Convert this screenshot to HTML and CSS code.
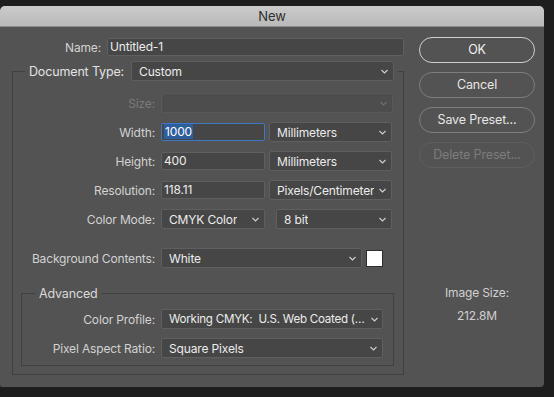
FILE: index.html
```html
<!DOCTYPE html>
<html lang="en">

<head>
  <meta charset="UTF-8">
  <title>New</title>
  <link rel="stylesheet" href="styles.css">
</head>

<body>
  <div class="window">
    <div class="titlebar">New</div>
    <div class="body">
      <!-- 左侧表单 -->
      <div class="form">
        <div class="name-row">
          <label class="lbl name-lbl">Name:</label>
          <div class="field grow">Untitled-1</div>
        </div>

        <fieldset class="group doc">
          <legend class="doc-legend">
            <label class="lbl doc-lbl">Document Type:</label>
            <div class="select grow">
              <span>Custom</span>
              <svg class="chev" width="7" height="5" viewBox="0 0 7 5"><polyline points="0.5,1 3.5,4 6.5,1" /></svg>
            </div>
          </legend>

          <div class="grid">
            <label class="lbl off">Size:</label>
            <div class="select off">
              <span></span>
              <svg class="chev" width="7" height="5" viewBox="0 0 7 5"><polyline points="0.5,1 3.5,4 6.5,1" /></svg>
            </div>

            <label class="lbl">Width:</label>
            <div class="pair">
              <div class="field num focus"><span class="hl">1000</span></div>
              <div class="select unit">
                <span>Millimeters</span>
                <svg class="chev" width="7" height="5" viewBox="0 0 7 5"><polyline points="0.5,1 3.5,4 6.5,1" /></svg>
              </div>
            </div>

            <label class="lbl">Height:</label>
            <div class="pair">
              <div class="field num">400</div>
              <div class="select unit">
                <span>Millimeters</span>
                <svg class="chev" width="7" height="5" viewBox="0 0 7 5"><polyline points="0.5,1 3.5,4 6.5,1" /></svg>
              </div>
            </div>

            <label class="lbl">Resolution:</label>
            <div class="pair">
              <div class="field num">118.11</div>
              <div class="select unit">
                <span>Pixels/Centimeter</span>
                <svg class="chev" width="7" height="5" viewBox="0 0 7 5"><polyline points="0.5,1 3.5,4 6.5,1" /></svg>
              </div>
            </div>

            <label class="lbl">Color Mode:</label>
            <div class="pair">
              <div class="select num">
                <span>CMYK Color</span>
                <svg class="chev" width="7" height="5" viewBox="0 0 7 5"><polyline points="0.5,1 3.5,4 6.5,1" /></svg>
              </div>
              <div class="select bits">
                <span>8 bit</span>
                <svg class="chev" width="7" height="5" viewBox="0 0 7 5"><polyline points="0.5,1 3.5,4 6.5,1" /></svg>
              </div>
            </div>

            <label class="lbl bg-lbl">Background Contents:</label>
            <div class="pair bg-row">
              <div class="select bg-sel">
                <span>White</span>
                <svg class="chev" width="7" height="5" viewBox="0 0 7 5"><polyline points="0.5,1 3.5,4 6.5,1" /></svg>
              </div>
              <div class="swatch"></div>
            </div>
          </div>

          <fieldset class="group adv">
            <legend class="adv-legend">Advanced</legend>
            <div class="grid adv-grid">
              <label class="lbl">Color Profile:</label>
              <div class="select profile">
                <span class="tight">Working CMYK:&nbsp; U.S. Web Coated (…</span>
                <svg class="chev" width="7" height="5" viewBox="0 0 7 5"><polyline points="0.5,1 3.5,4 6.5,1" /></svg>
              </div>

              <label class="lbl">Pixel Aspect Ratio:</label>
              <div class="select">
                <span>Square Pixels</span>
                <svg class="chev" width="7" height="5" viewBox="0 0 7 5"><polyline points="0.5,1 3.5,4 6.5,1" /></svg>
              </div>
            </div>
          </fieldset>
        </fieldset>
      </div>

      <!-- 右侧按钮 -->
      <div class="side">
        <div class="btn default">OK</div>
        <div class="btn">Cancel</div>
        <div class="btn">Save Preset...</div>
        <div class="btn off">Delete Preset...</div>
        <div class="size-info">
          <div>Image Size:</div>
          <div class="size-val">212.8M</div>
        </div>
      </div>
    </div>
  </div>
</body>

</html>
```

FILE: styles.css
```css
* {
  padding: 0;
  margin: 0;
  box-sizing: border-box;
}

body {
  background-color: #1e1e1e;
  font-family: Inter, "Liberation Sans", sans-serif;
  font-size: 12px;
  letter-spacing: -0.15px;
  color: #d4d4d4;
}

.window {
  width: 544px;
  height: 381px;
  margin-top: 6px;
  background-color: #535353;
  border-radius: 5px 5px 4px 2px;
  overflow: hidden;
}

.titlebar {
  height: 21px;
  line-height: 20px;
  text-align: center;
  font-size: 13px;
  color: #2e2e2e;
  background: linear-gradient(#cbcbcb, #b9b9b9);
  border-bottom: 1px solid #8d8d8d;
}

.body {
  display: flex;
  gap: 15px;
}

/* 表单 */
.form {
  width: 404px;
  padding: 11px 0 0 12px;
}

.name-row {
  display: flex;
  align-items: center;
  gap: 6px;
  margin-bottom: 5px;
}

.name-lbl {
  width: 89px;
}

.lbl {
  text-align: right;
  white-space: nowrap;
  color: #d2d2d2;
}

.lbl.off {
  color: #7a7a7a;
}

.grow {
  flex: 1;
  min-width: 0;
}

.field,
.select {
  height: 19px;
  line-height: 17px;
  padding: 0 4px;
  background-color: #464646;
  border: 1px solid #5f5f5f;
  border-radius: 2px;
  color: #ececec;
  white-space: nowrap;
}

.field {
  height: 18px;
  line-height: 16px;
  padding: 0 2px;
}

.field.focus {
  border-color: #3f78c2;
}

.hl {
  background-color: #2d5e9e;
  color: #ffffff;
  padding: 0 1px;
}

.select {
  display: flex;
  align-items: center;
  justify-content: space-between;
  gap: 2px;
  height: 20px;
  min-width: 0;
  padding: 0 5px 0 7px;
}

.select span {
  overflow: hidden;
}

.select.profile {
  padding: 0 4px 0 7px;
  gap: 1px;
}

.select .tight {
  flex: none;
  font-size: 11.6px;
  letter-spacing: -0.25px;
}

.select.off {
  background-color: #4d4d4d;
  border-color: #595959;
}

.chev {
  flex: none;
  fill: none;
  stroke: #d0d0d0;
  stroke-width: 1.1;
}

.select.off .chev {
  stroke: #6e6e6e;
}

.group {
  border: 1px solid #404040;
  min-width: 0;
}

.doc {
  padding: 0 0 8px;
}

.doc-legend {
  display: flex;
  align-items: center;
  gap: 7px;
  width: 373px;
  margin-left: 12px;
  padding: 0 4px;
}

.doc-lbl {
  font-size: 12.5px;
  color: #e2e2e2;
}

.grid {
  display: grid;
  grid-template-columns: 142px minmax(0, 1fr);
  column-gap: 6px;
  row-gap: 9px;
  align-items: center;
  padding: 12px 10px 0 0;
}

.pair {
  display: flex;
  align-items: center;
  gap: 4px;
}

.num {
  width: 104px;
}

.unit {
  width: 123px;
}

.bits {
  width: 116px;
  margin-left: 7px;
}

.bg-lbl,
.bg-row {
  margin-top: 10px;
}

.bg-sel {
  width: 201px;
}

.swatch {
  width: 17px;
  height: 17px;
  background-color: #ffffff;
  border: 1px solid #2e2e2e;
}

.adv {
  margin: 18px 9px 0 8px;
  padding: 0 0 7px;
}

.adv-legend {
  margin-left: 13px;
  padding: 0 4px;
  line-height: 15px;
  font-size: 12.5px;
  color: #dadada;
}

.adv-grid {
  grid-template-columns: 133px minmax(0, 1fr);
  row-gap: 9px;
  padding-top: 8px;
}

/* 按钮 */
.side {
  width: 116px;
  padding-top: 10px;
  display: flex;
  flex-direction: column;
  gap: 9px;
}

.btn {
  height: 26px;
  line-height: 24px;
  text-align: center;
  border: 1px solid #7e7e7e;
  border-radius: 13px;
  color: #e6e6e6;
  font-size: 12.5px;
}

.btn.default {
  border-color: #cfcfcf;
  color: #f0f0f0;
}

.btn.off {
  border-color: #5f5f5f;
  color: #7c7c7c;
}

.size-info {
  margin-top: 108px;
  text-align: center;
  color: #d0d0d0;
  line-height: 15px;
}

.size-val {
  margin-top: 8px;
}
```
